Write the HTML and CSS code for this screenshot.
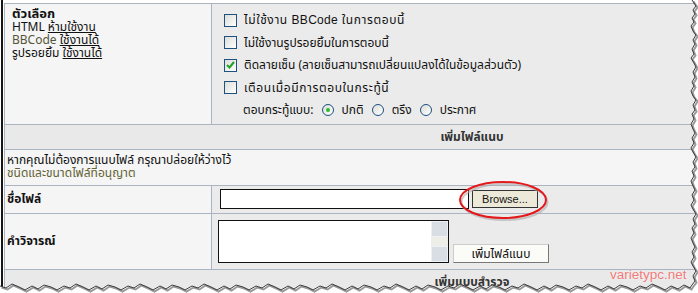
FILE: index.html
```html
<!DOCTYPE html>
<html lang="th">
<head>
    <meta charset="UTF-8">
    <title>ตอบกระทู้ - เพิ่มไฟล์แนบ</title>
    <link rel="stylesheet" href="styles.css">
</head>
<body>

<div class="shot">
    <div class="frame">
        <table class="post">
            <colgroup>
                <col class="col-lbl">
                <col>
            </colgroup>
            <tr class="opts">
                <td class="lbl top">
                    <b class="title">ตัวเลือก</b><br>
                    HTML <a href="#">ห้ามใช้งาน</a><br>
                    <span class="bb">BBCode</span> <a href="#">ใช้งานได้</a><br>
                    รูปรอยยิ้ม <a href="#">ใช้งานได้</a>
                </td>
                <td class="val top">
                    <div class="check"><span class="cb"></span><span class="wide">ไม่ใช้งาน <span class="latin">BBCode</span> ในการตอบนี้</span></div>
                    <div class="check"><span class="cb"></span>ไม่ใช้งานรูปรอยยิ้มในการตอบนี้</div>
                    <div class="check"><span class="cb on"><svg width="9" height="8" viewBox="0 0 9 8"><path d="M1 4 L3.5 6.5 L8 1" fill="none" stroke="#21a121" stroke-width="2"/></svg></span>ติดลายเซ็น (ลายเซ็นสามารถเปลี่ยนแปลงได้ในข้อมูลส่วนตัว)</div>
                    <div class="check"><span class="cb"></span><span class="wide">เตือนเมื่อมีการตอบในกระทู้นี้</span></div>
                    <div class="check radios">ตอบกระทู้แบบ:
                        <span class="rb on"></span>ปกติ
                        <span class="rb"></span>ตรึง
                        <span class="rb"></span>ประกาศ
                    </div>
                </td>
            </tr>
            <tr class="head">
                <th colspan="2">เพิ่มไฟล์แนบ</th>
            </tr>
            <tr class="note">
                <td colspan="2">
                    หากคุณไม่ต้องการแนบไฟล์ กรุณาปล่อยให้ว่างไว้<br>
                    <a href="#" class="olive">ชนิดและขนาดไฟล์ที่อนุญาต</a>
                </td>
            </tr>
            <tr class="file">
                <td class="lbl"><b>ชื่อไฟล์</b></td>
                <td class="val">
                    <div class="file-row">
                        <span class="file-box"></span>
                        <button class="browse">Browse...</button>
                    </div>
                </td>
            </tr>
            <tr class="comment">
                <td class="lbl"><b>คำวิจารณ์</b></td>
                <td class="val">
                    <div class="memo-row">
                        <div class="memo">
                            <div class="scroll">
                                <span class="arrow"></span>
                                <span class="track"></span>
                                <span class="arrow"></span>
                            </div>
                        </div>
                        <button class="add">เพิ่มไฟล์แนบ</button>
                    </div>
                </td>
            </tr>
            <tr class="head">
                <th colspan="2">เพิ่มแบบสำรวจ</th>
            </tr>
        </table>
    </div>

    <!-- red circle around the browse button -->
    <svg class="ring" width="100" height="46" viewBox="0 0 100 46">
        <ellipse cx="46.5" cy="22" rx="43" ry="18" fill="none" stroke="#aaa" stroke-width="2" opacity="0.6"/>
        <ellipse cx="45" cy="20" rx="43" ry="18" fill="none" stroke="#e3191c" stroke-width="2"/>
    </svg>

    <div class="watermark">varietypc.net</div>

    <!-- torn paper edge -->
    <svg class="torn" width="698" height="293" viewBox="0 0 698 293">
        <polygon fill="#fff" points="692,0 694,3 696,6 693,10 695,14 692,18 694,22 691,26 693,31 696,35 693,40 695,44 692,49 694,54 691,58 694,63 696,67 693,72 695,77 692,82 694,86 691,91 693,96 696,100 693,105 695,110 692,114 694,119 691,124 693,129 695,133 692,138 694,143 691,148 693,152 696,157 693,162 695,167 692,171 694,176 691,181 693,186 695,190 692,195 694,200 691,205 693,209 696,214 693,219 695,224 692,228 694,233 691,238 693,243 695,247 692,252 694,257 691,262 693,266 696,271 693,276 695,281 692,285 690,288 684,285 678,289 671,286 665,290 659,287 652,284 646,288 640,286 633,290 627,287 620,285 614,289 608,286 601,290 595,287 588,284 582,288 576,286 569,290 563,287 556,285 550,289 544,286 537,290 531,287 524,284 518,288 512,286 505,290 499,287 492,285 486,289 480,286 473,290 467,287 460,284 454,288 448,286 441,290 435,287 428,285 422,289 416,286 409,290 403,287 396,284 390,288 384,286 377,290 371,287 364,285 358,289 352,286 345,290 339,287 332,284 326,288 320,286 313,290 307,287 300,285 294,289 288,286 281,290 275,287 268,284 262,288 256,286 249,290 243,287 236,285 230,289 224,286 217,290 211,287 204,284 198,288 192,286 185,290 179,287 172,285 166,289 160,286 153,290 147,287 140,284 134,288 128,286 121,290 115,287 108,285 102,289 96,286 89,290 83,287 76,284 70,288 64,286 57,290 51,287 44,285 38,289 32,286 25,290 19,287 12,284 6,288 0,286 0,293 698,293 698,0"/>
        <polyline class="edge-shadow" points="692,0 694,3 696,6 693,10 695,14 692,18 694,22 691,26 693,31 696,35 693,40 695,44 692,49 694,54 691,58 694,63 696,67 693,72 695,77 692,82 694,86 691,91 693,96 696,100 693,105 695,110 692,114 694,119 691,124 693,129 695,133 692,138 694,143 691,148 693,152 696,157 693,162 695,167 692,171 694,176 691,181 693,186 695,190 692,195 694,200 691,205 693,209 696,214 693,219 695,224 692,228 694,233 691,238 693,243 695,247 692,252 694,257 691,262 693,266 696,271 693,276 695,281 692,285 690,288 684,285 678,289 671,286 665,290 659,287 652,284 646,288 640,286 633,290 627,287 620,285 614,289 608,286 601,290 595,287 588,284 582,288 576,286 569,290 563,287 556,285 550,289 544,286 537,290 531,287 524,284 518,288 512,286 505,290 499,287 492,285 486,289 480,286 473,290 467,287 460,284 454,288 448,286 441,290 435,287 428,285 422,289 416,286 409,290 403,287 396,284 390,288 384,286 377,290 371,287 364,285 358,289 352,286 345,290 339,287 332,284 326,288 320,286 313,290 307,287 300,285 294,289 288,286 281,290 275,287 268,284 262,288 256,286 249,290 243,287 236,285 230,289 224,286 217,290 211,287 204,284 198,288 192,286 185,290 179,287 172,285 166,289 160,286 153,290 147,287 140,284 134,288 128,286 121,290 115,287 108,285 102,289 96,286 89,290 83,287 76,284 70,288 64,286 57,290 51,287 44,285 38,289 32,286 25,290 19,287 12,284 6,288 0,286"/>
        <polyline class="edge" points="692,0 694,3 696,6 693,10 695,14 692,18 694,22 691,26 693,31 696,35 693,40 695,44 692,49 694,54 691,58 694,63 696,67 693,72 695,77 692,82 694,86 691,91 693,96 696,100 693,105 695,110 692,114 694,119 691,124 693,129 695,133 692,138 694,143 691,148 693,152 696,157 693,162 695,167 692,171 694,176 691,181 693,186 695,190 692,195 694,200 691,205 693,209 696,214 693,219 695,224 692,228 694,233 691,238 693,243 695,247 692,252 694,257 691,262 693,266 696,271 693,276 695,281 692,285 690,288 684,285 678,289 671,286 665,290 659,287 652,284 646,288 640,286 633,290 627,287 620,285 614,289 608,286 601,290 595,287 588,284 582,288 576,286 569,290 563,287 556,285 550,289 544,286 537,290 531,287 524,284 518,288 512,286 505,290 499,287 492,285 486,289 480,286 473,290 467,287 460,284 454,288 448,286 441,290 435,287 428,285 422,289 416,286 409,290 403,287 396,284 390,288 384,286 377,290 371,287 364,285 358,289 352,286 345,290 339,287 332,284 326,288 320,286 313,290 307,287 300,285 294,289 288,286 281,290 275,287 268,284 262,288 256,286 249,290 243,287 236,285 230,289 224,286 217,290 211,287 204,284 198,288 192,286 185,290 179,287 172,285 166,289 160,286 153,290 147,287 140,284 134,288 128,286 121,290 115,287 108,285 102,289 96,286 89,290 83,287 76,284 70,288 64,286 57,290 51,287 44,285 38,289 32,286 25,290 19,287 12,284 6,288 0,286"/>
    </svg>
</div>

</body>
</html>
```

FILE: styles.css
```css
/* Screenshot canvas */
body {
    margin: 0;
    background: #fff;
    font-family: Tahoma, "Noto Sans Thai", "Loma", "Garuda", "DejaVu Sans", sans-serif;
    font-size: 12px;
    color: #111;
}

.shot {
    position: relative;
    width: 698px;
    height: 293px;
    overflow: hidden;
    background: #fff;
}

/* Window edge on the left */
.frame {
    margin-left: 1px;
    border-left: 2px solid #161616;
    padding: 3px 0 0 1px;
    height: 290px;
}

/* Post form table */
.post {
    width: 936px;
    table-layout: fixed;
    border-collapse: collapse;
    border: 1px solid #aab5c1;
}

.col-lbl {
    width: 207px;
}

.post td,
.post th {
    border: 1px solid #aab5c1;
    padding: 0;
}

.lbl {
    background: #f5f5f5;
    padding-left: 2px !important;
}

.val {
    background: #ebebeb;
}

.top {
    vertical-align: top;
}

a {
    color: #111;
}

/* Options row */
.opts td {
    height: 111px;
}

.opts .lbl {
    padding-top: 4px !important;
    padding-left: 7px !important;
    font-size: 12px;
    line-height: 13px;
}

.title {
    font-size: 13px;
}

.bb {
    color: #55553a;
}

.opts .val {
    padding: 5px 0 2px 12px !important;
}

.check {
    height: 22.5px;
    display: flex;
    align-items: center;
    white-space: pre;
}

/* these lines run wider in the original font */
.wide {
    letter-spacing: 0.6px;
}

.latin {
    font-family: "Liberation Sans", Arial, sans-serif;
    letter-spacing: 0.3px;
}

.cb {
    width: 11px;
    height: 11px;
    border: 1px solid #1c5180;
    background: linear-gradient(135deg, #dcdcd7, #fff);
    margin-right: 7px;
    display: flex;
    align-items: center;
    justify-content: center;
}

.radios {
    padding-left: 19px;
    white-space: normal;
}

.rb {
    width: 10px;
    height: 10px;
    border: 1px solid #1c5180;
    border-radius: 50%;
    background: linear-gradient(135deg, #dcdcd7, #fff);
    margin: 0 8px 0 8px;
    display: flex;
    align-items: center;
    justify-content: center;
}

.rb.on::after {
    content: "";
    width: 4px;
    height: 4px;
    border-radius: 50%;
    background: #2dbb2d;
}

/* Section headers */
.head th {
    height: 24px;
    background: #e9e9e9;
    color: #333;
    font-size: 12px;
    text-align: center;
}

/* Attachment note */
.note td {
    height: 35px;
    background: #f5f5f5;
    padding-left: 2px;
    line-height: 13px;
}

.olive {
    color: #626234;
    text-decoration: none;
}

/* File name row */
.file td {
    height: 27px;
}

.file-row {
    display: flex;
    align-items: flex-end;
    padding-left: 8px;
}

.file-box {
    width: 247px;
    height: 18px;
    background: #fff;
    border: 1px solid #111;
}

.browse {
    margin-left: 3px;
    margin-bottom: 1px;
    width: 66px;
    height: 18px;
    padding: 0;
    background: #ece9d8;
    border: 1px solid #333;
    font-family: "Liberation Sans", Arial, sans-serif;
    font-size: 11px;
    color: #111;
}

/* Comment row */
.comment td {
    height: 55px;
}

.memo-row {
    display: flex;
    align-items: flex-end;
    padding-left: 6px;
}

.memo {
    width: 229px;
    height: 41px;
    background: #fff;
    border: 1px solid #111;
    display: flex;
    justify-content: flex-end;
}

.scroll {
    width: 17px;
    display: flex;
    flex-direction: column;
}

.arrow {
    height: 16px;
    background: #d9dee4;
    border: 1px solid #eef1f4;
    box-sizing: border-box;
}

.track {
    flex: 1;
    background: #eeeee8;
}

.add {
    margin-left: 4px;
    width: 96px;
    height: 19px;
    padding: 0;
    background: #fbfbf8;
    border: 1px solid #888;
    border-color: #ccc #777 #777 #ccc;
    font-family: inherit;
    font-size: 12px;
    color: #111;
}

/* Overlays */
.ring {
    position: absolute;
    left: 458px;
    top: 180px;
}

.watermark {
    position: absolute;
    left: 610px;
    top: 267px;
    font-family: "Liberation Sans", Arial, sans-serif;
    font-size: 13.5px;
    line-height: 16px;
    color: #f07a7a;
    text-shadow: 0 0 2px #fff;
}

.torn {
    position: absolute;
    left: 0;
    top: 0;
}

.edge {
    fill: none;
    stroke: #3a3a3a;
    stroke-width: 1;
}

.edge-shadow {
    fill: none;
    stroke: #9a9a9a;
    stroke-width: 2;
    transform: translate(1.5px, 1.5px);
}
```
